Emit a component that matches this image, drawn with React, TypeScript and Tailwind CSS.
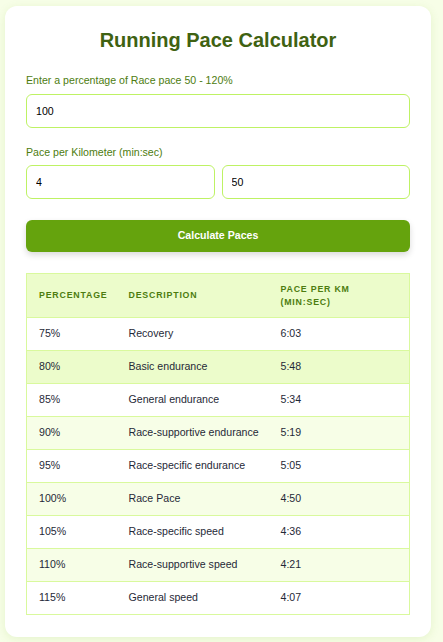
import { useState } from "react";

const zones = [
  { pct: 75, label: "Recovery" },
  { pct: 80, label: "Basic endurance" },
  { pct: 85, label: "General endurance" },
  { pct: 90, label: "Race-supportive endurance" },
  { pct: 95, label: "Race-specific endurance" },
  { pct: 100, label: "Race Pace" },
  { pct: 105, label: "Race-specific speed" },
  { pct: 110, label: "Race-supportive speed" },
  { pct: 115, label: "General speed" },
];

function formatPace(totalSec: number) {
  const t = Math.round(totalSec);
  const m = Math.floor(t / 60);
  const s = t % 60;
  return `${m}:${s.toString().padStart(2, "0")}`;
}

export default function App() {
  const [percent, setPercent] = useState("100");
  const [min, setMin] = useState("4");
  const [sec, setSec] = useState("50");
  const [base, setBase] = useState(4 * 60 + 50);

  const handleCalculate = () => {
    const p = parseFloat(percent) || 100;
    const raceSec = (parseInt(min) || 0) * 60 + (parseInt(sec) || 0);
    setBase((raceSec * p) / 100);
  };

  return (
    <div className="min-h-screen bg-[#f7fee7] pt-[6px] pb-[6px] font-['Liberation_Sans',Arial,sans-serif]">
      <div className="ml-[5px] w-[426px] rounded-[12px] bg-white px-[21px] pt-[20px] pb-[22px] shadow-[0_2px_10px_rgba(101,163,13,0.12)]">
        <h1 className="mb-[19px] text-center text-[20px] font-bold leading-[28px] text-[#3f6212]">
          Running Pace Calculator
        </h1>

        <label className="mb-[7px] block text-[10.6px] leading-[14px] text-[#4d7c0f]">
          Enter a percentage of Race pace 50 - 120%
        </label>
        <input
          value={percent}
          onChange={(e) => setPercent(e.target.value)}
          className="block h-[34px] w-full rounded-[6px] border border-[#bef264] px-[9px] text-[10.6px] text-black outline-none"
        />

        <label className="mt-[17px] mb-[6px] block text-[10.6px] leading-[14px] text-[#4d7c0f]">
          Pace per Kilometer (min:sec)
        </label>
        <div className="grid grid-cols-2 gap-[7px]">
          <input
            value={min}
            onChange={(e) => setMin(e.target.value)}
            className="block h-[34px] w-full rounded-[6px] border border-[#bef264] px-[9px] text-[10.6px] text-black outline-none"
          />
          <input
            value={sec}
            onChange={(e) => setSec(e.target.value)}
            className="block h-[34px] w-full rounded-[6px] border border-[#bef264] px-[9px] text-[10.6px] text-black outline-none"
          />
        </div>

        <button
          onClick={handleCalculate}
          className="mt-[21px] flex h-[32px] w-full items-center justify-center rounded-[6px] bg-[#65a30d] text-[10.6px] font-bold text-white shadow-[0_3px_6px_rgba(0,0,0,0.15)]"
        >
          Calculate Paces
        </button>

        <table className="mt-[21px] w-full table-fixed border-collapse border border-[#d9f99d] text-[10.6px] text-[#1f2937]">
          <colgroup>
            <col className="w-[90px]" />
            <col className="w-[152px]" />
            <col />
          </colgroup>
          <thead>
            <tr className="h-[44px] bg-[#ecfccb]">
              <th className="px-[12px] text-left text-[8.8px] font-bold uppercase leading-[13px] tracking-[0.8px] text-[#4d7c0f]">
                Percentage
              </th>
              <th className="px-[12px] text-left text-[8.8px] font-bold uppercase leading-[13px] tracking-[0.8px] text-[#4d7c0f]">
                Description
              </th>
              <th className="px-[12px] text-left text-[8.8px] font-bold uppercase leading-[13px] tracking-[0.8px] text-[#4d7c0f]">
                Pace per km
                <br />
                (min:sec)
              </th>
            </tr>
          </thead>
          <tbody>
            {zones.map((z, i) => {
              const bg =
                z.pct === 80
                  ? "bg-[#ecfccb]"
                  : i % 2 === 1
                  ? "bg-[#f7fee7]"
                  : "bg-white";
              return (
                <tr
                  key={z.pct}
                  className={`h-[33px] border-t border-[#d9f99d] ${bg}`}
                >
                  <td className="px-[12px]">{z.pct}%</td>
                  <td className="px-[12px] whitespace-nowrap">{z.label}</td>
                  <td className="px-[12px]">
                    {formatPace(base * (2 - z.pct / 100))}
                  </td>
                </tr>
              );
            })}
          </tbody>
        </table>
      </div>
    </div>
  );
}
